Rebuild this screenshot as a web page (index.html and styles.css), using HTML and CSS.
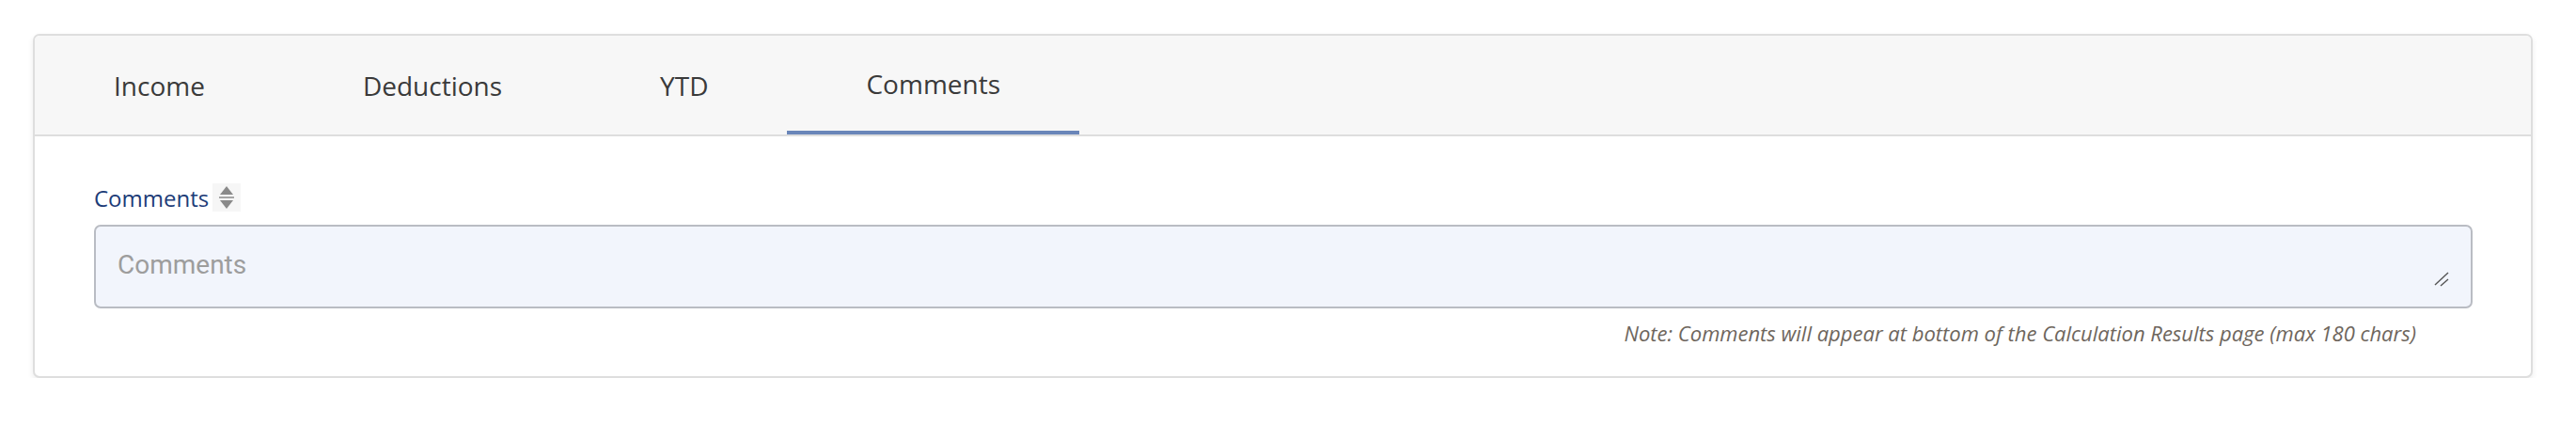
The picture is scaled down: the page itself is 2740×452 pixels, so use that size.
FILE: index.html
```html
<!DOCTYPE html>
<html lang="en">
<head>
  <meta charset="UTF-8" />
  <meta name="viewport" content="width=device-width, initial-scale=1" />
  <title>Payslip Details</title>
  <link rel="stylesheet" href="styles.css">
</head>
<body>
  <section class="panel">
    <nav class="tabs">
      <button class="tab">Income</button>
      <button class="tab">Deductions</button>
      <button class="tab">YTD</button>
      <button class="tab active">Comments</button>
    </nav>

    <div class="panel-body">
      <div class="field-label">
        <label for="commentsInput">Comments</label>
        <span class="sort-toggle" aria-hidden="true">
          <svg width="18" height="26" viewBox="0 0 18 26">
            <polygon points="9,1 16,10 2,10" fill="#8a8a8a" />
            <line x1="1" y1="13" x2="17" y2="13" stroke="#8a8a8a" stroke-width="1.5" />
            <polygon points="2,16 16,16 9,25" fill="#8a8a8a" />
          </svg>
        </span>
      </div>

      <div class="textarea-wrap">
        <textarea id="commentsInput" maxlength="180" placeholder="Comments"></textarea>
        <svg class="grip" width="16" height="16" viewBox="0 0 16 16" aria-hidden="true">
          <line x1="1" y1="14" x2="15" y2="1" stroke="#555" stroke-width="1.4" />
          <line x1="7" y1="15" x2="15" y2="8" stroke="#555" stroke-width="1.4" />
        </svg>
      </div>

      <p class="note">Note: Comments will appear at bottom of the Calculation Results page (max 180 chars)</p>
    </div>
  </section>
</body>
</html>
```

FILE: styles.css
```css
:root {
  --border-color: #dedede;
  --header-bg: #f7f7f7;
  --tab-text: #3a3a3a;
  --accent: #6a86b9;
  --label-color: #1d3c78;
  --input-bg: #f2f5fc;
  --input-border: #b9bcc3;
  --note-color: #6e665d;
}

body {
  margin: 0;
  background: #fff;
  font-family: 'Open Sans', 'Noto Sans', sans-serif;
}

.panel {
  margin: 36px 46px 0 35px;
  border: 2px solid var(--border-color);
  border-radius: 7px;
  box-shadow: 0 3px 6px rgba(0, 0, 0, 0.08);
  overflow: hidden;
  background: #fff;
}

.tabs {
  display: flex;
  background: var(--header-bg);
  border-bottom: 2px solid var(--border-color);
  height: 105px;
}

.tab {
  background: none;
  border: none;
  border-bottom: 4px solid transparent;
  padding: 4px 84px 0;
  margin: 0;
  font-family: 'Open Sans', 'Noto Sans', sans-serif;
  font-size: 28px;
  font-weight: 500;
  color: var(--tab-text);
  cursor: pointer;
}

.tab.active {
  border-bottom-color: var(--accent);
  padding-top: 0;
}

.panel-body {
  padding: 50px 62px 31px 63px;
}

.field-label {
  display: flex;
  align-items: center;
  gap: 4px;
  height: 30px;
  margin-bottom: 14px;
}

.field-label label {
  font-size: 24px;
  color: var(--label-color);
}

.sort-toggle {
  display: flex;
  align-items: center;
  justify-content: center;
  width: 30px;
  height: 30px;
  background: #f6f6f6;
}

.textarea-wrap {
  position: relative;
}

textarea {
  display: block;
  width: 100%;
  height: 89px;
  box-sizing: border-box;
  padding: 24px 23px 10px;
  border: 2px solid var(--input-border);
  border-radius: 7px;
  background: var(--input-bg);
  font-family: Roboto, sans-serif;
  font-size: 28px;
  color: #333;
  resize: none;
  outline: none;
}

textarea::placeholder {
  color: #9d9d9d;
}

.grip {
  position: absolute;
  right: 25px;
  bottom: 23px;
}

.note {
  margin: 11px 60px 0 0;
  text-align: right;
  font-style: italic;
  font-size: 22px;
  color: var(--note-color);
}
```
